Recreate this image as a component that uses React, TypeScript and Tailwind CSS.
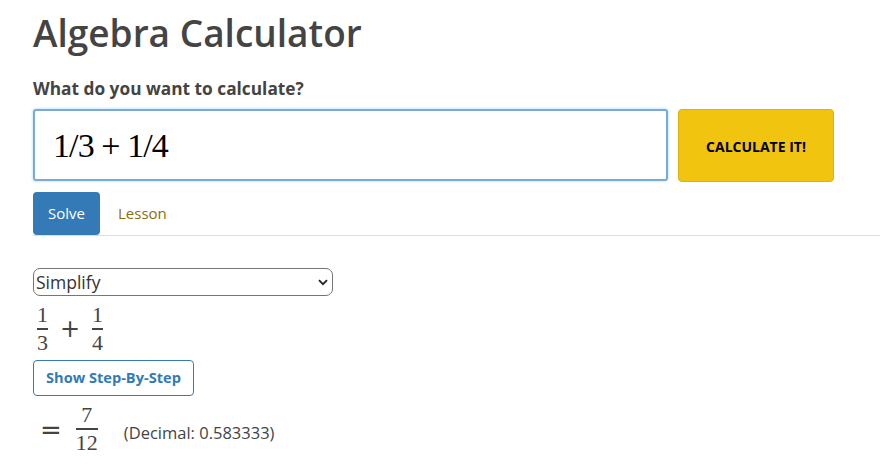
import { useState } from "react";

function Frac({ num, den }: { num: string; den: string }): React.JSX.Element {
  return (
    <span className="inline-flex flex-col items-center px-[4px] font-['Liberation_Serif',serif] text-[22px]">
      <span className="leading-[22px]">{num}</span>
      <span className="mt-[2px] h-[2px] w-full bg-[#444]" />
      <span className="mt-[1px] leading-[24px]">{den}</span>
    </span>
  );
}

export default function App(): React.JSX.Element {
  const [expr, setExpr] = useState("1/3 + 1/4");
  const [mode, setMode] = useState("Simplify");

  return (
    <div className="min-h-[475px] bg-white pl-[33px] pr-[12px] font-['Open_Sans',sans-serif] text-[#444]">
      <h1 className="pt-[9px] text-[37px] leading-[48px] font-semibold">Algebra Calculator</h1>
      <p className="mt-[22px] text-[17.3px] leading-[20px] font-bold">What do you want to calculate?</p>

      <div className="mt-[10px] flex items-start gap-[10px]">
        <div className="flex h-[72px] w-[635px] items-center rounded-[3px] border-2 border-[#7aaad6] px-[18px] shadow-[0_0_3px_rgba(102,175,233,0.6)]">
          <input
            value={expr}
            onChange={(e) => setExpr(e.target.value)}
            className="w-full bg-transparent font-['Liberation_Serif',serif] text-[34px] tracking-[-0.9px] text-black outline-none"
          />
        </div>
        <button className="h-[73px] w-[156px] rounded-[4px] border border-[#dcb20c] bg-[#f1c40f] pt-[2px] text-[14px] font-bold text-black">
          CALCULATE IT!
        </button>
      </div>

      <div className="mt-[10px] flex items-end border-b border-[#dddddd]">
        <button className="h-[43px] w-[67px] rounded-[4px] bg-[#337ab7] text-[15px] text-white">
          Solve
        </button>
        <button className="ml-[18px] h-[43px] text-[15px] text-[#8a6d0b]">Lesson</button>
      </div>

      <div className="mt-[32px]">
        <div className="relative w-[300px]">
          <select
            value={mode}
            onChange={(e) => setMode(e.target.value)}
            className="h-[28px] w-full appearance-none rounded-[7px] border border-[#767676] pl-[2px] text-[17.5px] leading-[26px] text-[#333]"
          >
            <option>Simplify</option>
            <option>Solve for x</option>
            <option>Factor</option>
            <option>Expand</option>
          </select>
          <svg
            className="pointer-events-none absolute top-[11px] right-[5px]"
            width="10"
            height="7"
            viewBox="0 0 10 7"
          >
            <path d="M1 1.2 L5 5.2 L9 1.2" fill="none" stroke="#222" strokeWidth="1.8" />
          </svg>
        </div>

        <div className="mt-[8px] flex items-center text-[#444]">
          <Frac num="1" den="3" />
          <span className="mx-[8px] mb-[2px] font-['DejaVu_Sans',sans-serif] text-[24px] leading-none">+</span>
          <Frac num="1" den="4" />
        </div>

        <button className="mt-[5px] h-[36px] rounded-[4px] border border-[#337ab7] px-[12px] text-[14.6px] font-bold text-[#337ab7]">
          Show Step-By-Step
        </button>

        <div className="mt-[8px] flex items-center">
          <span className="ml-[7px] font-['DejaVu_Sans',sans-serif] text-[26px] leading-none text-[#444]">=</span>
          <span className="ml-[10px]">
            <Frac num="7" den="12" />
          </span>
          <span className="ml-[22px] mt-[8px] text-[16.5px] text-[#444]">(Decimal: 0.583333)</span>
        </div>
      </div>
    </div>
  );
}
